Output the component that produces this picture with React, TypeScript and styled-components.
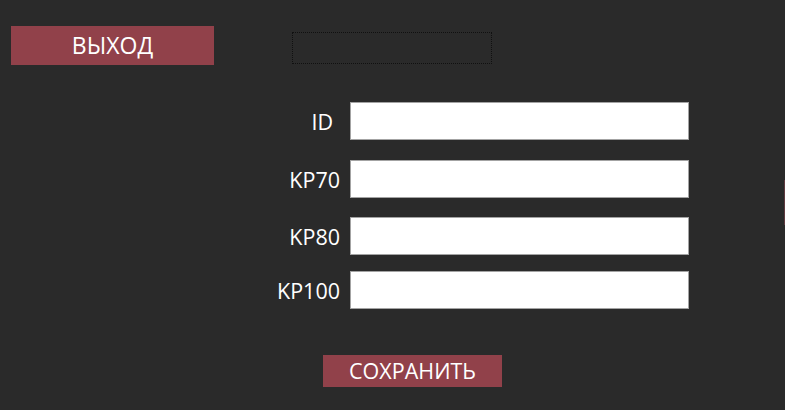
import React from "react";
import styled, { createGlobalStyle } from "styled-components";

const Global = createGlobalStyle`
  html, body {
    margin: 0;
    padding: 0;
    background: #2a2a2a;
    width: 785px;
    height: 410px;
    overflow: hidden;
  }
  * { box-sizing: border-box; }
`;

const Page = styled.div`
  position: relative;
  width: 785px;
  height: 410px;
  background: #2a2a2a;
  font-family: "Open Sans", "Noto Sans", sans-serif;
  color: #ffffff;
  padding-top: 26px;
`;

const TopBar = styled.div`
  display: flex;
  align-items: flex-start;
  padding-left: 11px;
`;

const RedButton = styled.button<{ $w: number; $h: number; $fs: number }>`
  width: ${(p) => p.$w}px;
  height: ${(p) => p.$h}px;
  background: #91414a;
  border: none;
  color: #ffffff;
  font-family: "Open Sans", "Noto Sans", sans-serif;
  font-size: ${(p) => p.$fs}px;
  padding: 0;
  display: flex;
  align-items: center;
  justify-content: center;
  line-height: 1;
  cursor: pointer;
`;

const DottedBox = styled.div`
  margin-left: 78px;
  margin-top: 6px;
  width: 200px;
  height: 32px;
  border: 1px dotted #101010;
`;

const Form = styled.div`
  margin-top: 37px;
  display: grid;
  grid-template-columns: 340px 339px;
  column-gap: 10px;
`;

const Label = styled.label<{ $top: number; $pad?: number }>`
  margin-top: ${(p) => p.$top}px;
  padding-right: ${(p) => p.$pad ?? 0}px;
  height: 38px;
  display: flex;
  align-items: center;
  justify-content: flex-end;
  font-size: 21.5px;
  color: #ffffff;
`;

const Input = styled.input<{ $top: number }>`
  margin-top: ${(p) => p.$top}px;
  width: 339px;
  height: 38px;
  background: #ffffff;
  border: 1px solid #a3a3a3;
  outline: none;
  padding: 0 4px;
  font-family: "Open Sans", "Noto Sans", sans-serif;
  font-size: 16px;
`;

const SaveRow = styled.div`
  margin-top: 46px;
  padding-left: 323px;
  display: flex;
`;

const EdgeSliver = styled.div`
  position: absolute;
  right: 0;
  top: 180px;
  width: 1px;
  height: 45px;
  background: #5e3a3f;
`;

const rows = [
  { label: "ID", top: 0, pad: 7 },
  { label: "KP70", top: 20, pad: 0 },
  { label: "KP80", top: 19, pad: 0 },
  { label: "KP100", top: 16, pad: 0 },
];

export default function App() {
  return (
    <>
      <Global />
      <Page>
        <TopBar>
          <RedButton $w={203} $h={39} $fs={23}>ВЫХОД</RedButton>
          <DottedBox />
        </TopBar>
        <Form>
          {rows.map((r) => (
            <React.Fragment key={r.label}>
              <Label $top={r.top} $pad={r.pad}>{r.label}</Label>
              <Input $top={r.top} />
            </React.Fragment>
          ))}
        </Form>
        <SaveRow>
          <RedButton $w={179} $h={32} $fs={21.5}>СОХРАНИТЬ</RedButton>
        </SaveRow>
        <EdgeSliver />
      </Page>
    </>
  );
}
